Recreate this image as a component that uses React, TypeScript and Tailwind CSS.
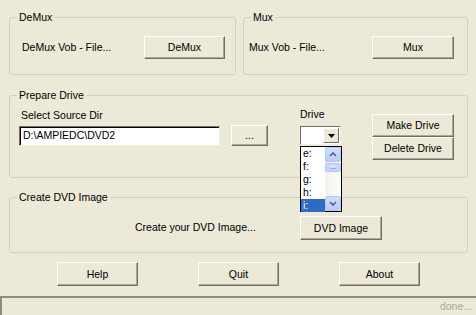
import type { ReactNode } from 'react';

const font = { fontFamily: '"Liberation Sans", Arial, sans-serif' };

function XpButton({ children, className = '' }: { children: ReactNode; className?: string }) {
  return (
    <button
      className={`flex items-center justify-center bg-[#ECE9D8] text-[10.5px] leading-none text-black border border-t-white border-l-white border-r-[#716F64] border-b-[#716F64] shadow-[inset_-1px_-1px_0_#ACA899] ${className}`}
    >
      {children}
    </button>
  );
}

function GroupBox({ title, className = '', children }: { title: string; className?: string; children: ReactNode }) {
  return (
    <fieldset className={`border border-[#D0D0BF] rounded-[3px] px-0 pb-0 m-0 ${className}`}>
      <legend className="ml-[7px] px-[2px] text-[10.5px] font-normal leading-[13px] text-black">{title}</legend>
      {children}
    </fieldset>
  );
}

function ScrollArrow({ up }: { up?: boolean }) {
  return (
    <div className="h-[15px] flex items-center justify-center rounded-[2px] border border-[#B4C8F6] bg-gradient-to-b from-[#D2DEFC] to-[#B9CCF8]">
      <svg width="8" height="5" viewBox="0 0 8 5">
        <path d={up ? 'M1 4 L4 1 L7 4' : 'M1 1 L4 4 L7 1'} stroke="#4D6185" strokeWidth="1.6" fill="none" />
      </svg>
    </div>
  );
}

function DriveList() {
  const drives = ['e:', 'f:', 'g:', 'h:', 'i:'];
  return (
    <div className="absolute left-[-1px] top-[19px] w-[42px] h-[66px] border border-black bg-white flex z-10">
      <div className="flex-1 flex flex-col">
        {drives.map((d) => (
          <div
            key={d}
            className={`h-[13px] pl-[2px] text-[10.5px] leading-[13px] ${d === 'i:' ? 'bg-[#316AC5] text-white' : 'text-black'}`}
          >
            {d}
          </div>
        ))}
      </div>
      <div className="w-[16px] flex flex-col bg-gradient-to-r from-[#F3F1EC] to-[#FEFEFB]">
        <ScrollArrow up />
        <div className="mt-[1px] h-[9px] rounded-[2px] border border-[#B4C8F6] bg-[#C8D6FB] flex flex-col items-center justify-center gap-[1px]">
          <div className="w-[6px] h-px bg-[#EEF4FE]" />
          <div className="w-[6px] h-px bg-[#8CB0F8]" />
        </div>
        <div className="flex-1" />
        <ScrollArrow />
      </div>
    </div>
  );
}

export default function App() {
  return (
    <div className="w-[476px] h-[315px] bg-[#ECE9D8] overflow-hidden flex flex-col text-black" style={font}>
      {/* DeMux / Mux */}
      <div className="flex gap-[7px] pl-[9px] pt-[11px]">
        <GroupBox title="DeMux" className="w-[227px] h-[64px]">
          <div className="flex items-center mt-[12px]">
            <span className="ml-[12px] text-[10.5px]">DeMux Vob - File...</span>
            <XpButton className="ml-auto mr-[10px] w-[81px] h-[23px]">DeMux</XpButton>
          </div>
        </GroupBox>
        <GroupBox title="Mux" className="w-[225px] h-[64px]">
          <div className="flex items-center mt-[12px]">
            <span className="ml-[5px] text-[10.5px]">Mux Vob - File...</span>
            <XpButton className="ml-auto mr-[13px] w-[82px] h-[23px]">Mux</XpButton>
          </div>
        </GroupBox>
      </div>

      {/* Prepare Drive */}
      <div className="pl-[9px] mt-[14px]">
        <GroupBox title="Prepare Drive" className="w-[459px] h-[89px]">
          <div className="flex items-start">
            <div className="ml-[9px] mt-[7px] flex flex-col">
              <span className="text-[10.5px] leading-[13px] ml-[2px]">Select Source Dir</span>
              <div className="mt-[4px] w-[201px] h-[20px] bg-white border border-t-[#716F64] border-l-[#716F64] border-r-[#F1EFE2] border-b-[#F1EFE2] shadow-[inset_1px_1px_0_#000] flex items-center pl-[3px] text-[10.5px]">
                D:\AMPIEDC\DVD2
              </div>
            </div>
            <XpButton className="ml-[11px] mt-[23px] w-[37px] h-[21px]">...</XpButton>
            <div className="ml-[32px] mt-[6px] flex flex-col">
              <span className="text-[10.5px] leading-[13px]">Drive</span>
              <div className="relative mt-[5px] w-[41px] h-[19px] bg-white border border-t-[#716F64] border-l-[#716F64] border-r-[#F1EFE2] border-b-[#F1EFE2] flex justify-end">
                <div className="m-[1px] w-[16px] bg-[#ECE9D8] border border-t-white border-l-white border-r-[#716F64] border-b-[#716F64] flex items-center justify-center">
                  <svg width="7" height="4" viewBox="0 0 7 4">
                    <path d="M0 0 H7 L3.5 4 Z" fill="#000" />
                  </svg>
                </div>
                <DriveList />
              </div>
            </div>
            <div className="ml-[31px] mt-[12px] flex flex-col">
              <XpButton className="w-[82px] h-[23px]">Make Drive</XpButton>
              <XpButton className="w-[82px] h-[23px]">Delete Drive</XpButton>
            </div>
          </div>
        </GroupBox>
      </div>

      {/* Create DVD Image */}
      <div className="pl-[9px] mt-[13px]">
        <GroupBox title="Create DVD Image" className="w-[459px] h-[62px]">
          <div className="flex items-center mt-[12px]">
            <span className="ml-[125px] text-[10.5px]">Create your DVD Image...</span>
            <XpButton className="ml-auto mr-[85px] w-[82px] h-[24px]">DVD Image</XpButton>
          </div>
        </GroupBox>
      </div>

      {/* Bottom buttons */}
      <div className="flex gap-[60px] pl-[57px] mt-[9px]">
        <XpButton className="w-[81px] h-[24px]">Help</XpButton>
        <XpButton className="w-[81px] h-[24px]">Quit</XpButton>
        <XpButton className="w-[81px] h-[24px]">About</XpButton>
      </div>

      {/* Status bar */}
      <div className="mt-auto h-[19px] border-t-2 border-l-2 border-[#8F8C7E] flex items-center justify-end pr-[4px]">
        <span className="text-[10.5px] text-[#ACA899]">done...</span>
      </div>
    </div>
  );
}
